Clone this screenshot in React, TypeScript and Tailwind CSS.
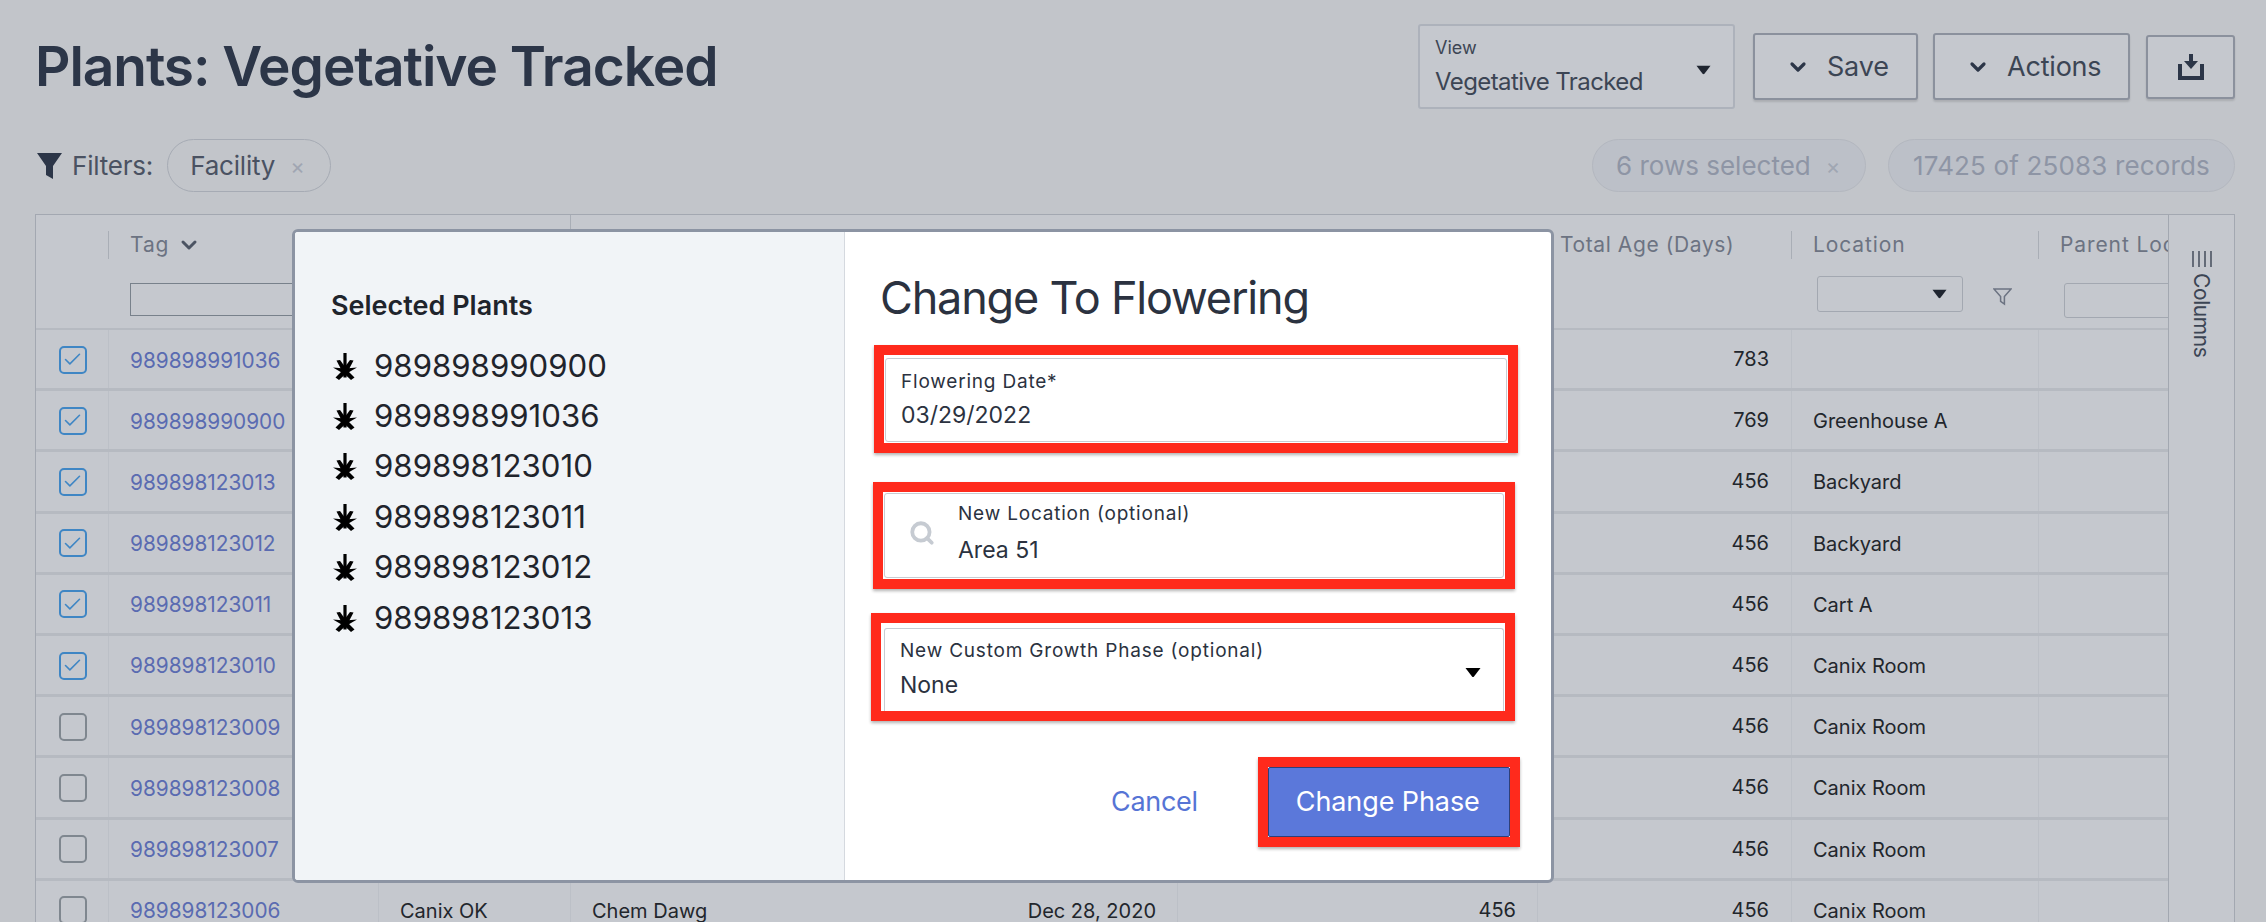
import React from "react";
import { ChevronDown, Check, Search } from "lucide-react";

const rows = [
  { tag: "989898991036", on: true, age: "783", loc: "" },
  { tag: "989898990900", on: true, age: "769", loc: "Greenhouse A" },
  { tag: "989898123013", on: true, age: "456", loc: "Backyard" },
  { tag: "989898123012", on: true, age: "456", loc: "Backyard" },
  { tag: "989898123011", on: true, age: "456", loc: "Cart A" },
  { tag: "989898123010", on: true, age: "456", loc: "Canix Room" },
  { tag: "989898123009", on: false, age: "456", loc: "Canix Room" },
  { tag: "989898123008", on: false, age: "456", loc: "Canix Room" },
  { tag: "989898123007", on: false, age: "456", loc: "Canix Room" },
  { tag: "989898123006", on: false, age: "456", loc: "Canix Room", last: true },
];

const plants = ["989898990900", "989898991036", "989898123010", "989898123011", "989898123012", "989898123013"];

function Caret({ className = "" }: { className?: string }) {
  return (
    <svg viewBox="0 0 16 10" className={className} fill="currentColor">
      <path d="M0.5 0.5 H15.5 L9 9 Q8 10 7 9 Z" />
    </svg>
  );
}

function Leaf() {
  return (
    <svg viewBox="0 0 24 27" className="h-[27px] w-[24px] shrink-0 text-black" fill="currentColor">
      <path d="M10.4 0 H13.6 V19 H10.4 Z" />
      <path d="M3.5 7.5 L7 7 L14 16.5 L10 20 Z" />
      <path d="M20.5 7.5 L17 7 L10 16.5 L14 20 Z" />
      <path d="M0 14.5 L12 15.5 L12 21.5 Z" />
      <path d="M24 14.5 L12 15.5 L12 21.5 Z" />
      <path d="M2.5 24.5 L10 17 L13 20.5 L6 27 Z" />
      <path d="M21.5 24.5 L14 17 L11 20.5 L18 27 Z" />
      <path d="M10.4 19 H13.6 V24.5 H10.4 Z" />
    </svg>
  );
}

function Box({ on }: { on: boolean }) {
  return (
    <div
      className={
        "flex h-[28px] w-[28px] items-center justify-center rounded-[5px] border-2 " +
        (on ? "border-[#3f86c4] text-[#3f86c4]" : "border-[#7f878f]")
      }
    >
      {on && <Check size={21} strokeWidth={1.8} />}
    </div>
  );
}

function Row({ r }: { r: (typeof rows)[number] }) {
  return (
    <div className="flex h-[61.2px] w-[2132px] shrink-0 items-stretch border-b-[3px] border-[#b6bac1] text-[20px] text-[#22262c]">
      <div className="flex w-[72px] items-center justify-center pl-[1px] pt-[1px]">
        <Box on={r.on} />
      </div>
      <div className="flex w-[270px] items-center border-l border-[#bcc0c7] pl-[21px] pt-[2px] text-[20.8px] text-[#5a6bb1]">{r.tag}</div>
      <div className="flex w-[192px] items-center border-l border-[#bcc0c7] pl-[21px] pt-[2px]">{r.last ? "Canix OK" : ""}</div>
      <div className="flex w-[607px] items-center justify-between border-l border-[#bcc0c7] pl-[21px] pr-[21px] pt-[2px]">
        <span>{r.last ? "Chem Dawg" : ""}</span>
        <span>{r.last ? "Dec 28, 2020" : ""}</span>
      </div>
      <div className="flex w-[360px] items-center justify-end border-l border-[#bcc0c7] pr-[21px]">{r.last ? "456" : ""}</div>
      <div className="flex w-[254px] items-center justify-end border-l border-[#bcc0c7] pr-[22px]">{r.age}</div>
      <div className="flex w-[247px] items-center border-l border-[#bcc0c7] pl-[21px] pt-[2px]">{r.loc}</div>
      <div className="w-[130px] border-l border-[#bcc0c7]" />
    </div>
  );
}

const redBox = "border-[10px] border-[#ff2a1c] shadow-[0_2px_3px_rgba(0,0,0,0.3)]";
const labelCls = "text-[19px] leading-[24px] tracking-[0.8px] text-[#2b3240]";
const valueCls = "text-[23px] leading-[28px] text-[#2b3240]";

export default function App() {
  return (
    <div className="relative h-[922px] w-[2266px] overflow-hidden bg-[#c2c5ca] font-['Inter',sans-serif] text-[#2c3648]">
      <div className="flex h-[109px] items-center justify-between pl-[35px] pr-[31px] pt-[24px]">
        <h1 className="mt-[-2px] text-[55px] font-semibold leading-[66px] tracking-[-1.05px] text-[#2c3648]">Plants: Vegetative Tracked</h1>
        <div className="flex items-center">
          <div className="relative h-[85px] w-[317px] rounded-[3px] border-2 border-[#adb2bb] bg-[#c5c8ce] pl-[15px] pt-[10px]">
            <div className="text-[18px] leading-[24px] text-[#3c4554]">View</div>
            <div className="mt-[8px] text-[24px] leading-[28px] tracking-[-0.6px] text-[#3c4554]">Vegetative Tracked</div>
            <Caret className="absolute right-[22px] top-[39px] h-[10px] w-[15px] text-[#1f2530]" />
          </div>
          <div className="ml-[18px] flex h-[67px] w-[165px] items-center rounded-[3px] border-2 border-[#8b919d] bg-[#c5c8ce] pl-[31px] text-[27px] tracking-[-0.2px] text-[#3c4554] shadow-[0_2px_2px_rgba(0,0,0,0.12)]">
            <ChevronDown size={24} strokeWidth={3.2} className="mr-[17px] text-[#2c3648]" />
            <span className="mt-[2px]">Save</span>
          </div>
          <div className="ml-[15px] flex h-[67px] w-[197px] items-center rounded-[3px] border-2 border-[#8b919d] bg-[#c5c8ce] pl-[31px] text-[27px] tracking-[-0.2px] text-[#3c4554] shadow-[0_2px_2px_rgba(0,0,0,0.12)]">
            <ChevronDown size={24} strokeWidth={3.2} className="mr-[17px] text-[#2c3648]" />
            <span className="mt-[2px]">Actions</span>
          </div>
          <div className="ml-[16px] flex h-[64px] w-[89px] items-center justify-center rounded-[3px] border-2 border-[#8b919d] bg-[#c5c8ce] shadow-[0_2px_2px_rgba(0,0,0,0.12)]">
            <svg viewBox="0 0 26 26" className="h-[26px] w-[26px] text-[#2c3648]" fill="currentColor">
              <path d="M11 0 H15 V7 H20 L13 15 L6 7 H11 Z" />
              <path d="M0 10 H4 V22 H22 V10 H26 V26 H0 Z" />
            </svg>
          </div>
        </div>
      </div>

      <div className="mt-[30px] flex h-[53px] items-center justify-between pl-[37px] pr-[31px]">
        <div className="flex items-center">
          <svg viewBox="0 0 25 26" className="h-[26px] w-[25px] text-[#2c3648]" fill="currentColor">
            <path d="M0 0 H25 L16 13 V26 L9 22 V13 Z" />
          </svg>
          <span className="ml-[10px] text-[26px] tracking-[-0.2px] text-[#4a5262]">Filters:</span>
          <div className="ml-[14px] flex h-[53px] w-[164px] items-center rounded-full border border-[#a6abb4] pl-[22px] text-[26px] tracking-[-0.2px] text-[#4a5262]">
            Facility
            <span className="ml-[15px] text-[22px] leading-none text-[#a0a6b2]">×</span>
          </div>
        </div>
        <div className="flex items-center">
          <div className="flex h-[53px] w-[274px] items-center rounded-full border border-[#b3b7bf] bg-[#bcc0c8] pl-[23px] text-[26px] text-[#8e95a5]">
            6 rows selected
            <span className="ml-[15px] text-[22px] leading-none text-[#a0a6b2]">×</span>
          </div>
          <div className="ml-[22px] flex h-[53px] w-[347px] items-center justify-center rounded-full border border-[#b3b7bf] bg-[#bcc0c8] text-[26px] tracking-[0.15px] text-[#8e95a5]">
            17425 of 25083 records
          </div>
        </div>
      </div>

      <div className="ml-[35px] mt-[22px] flex h-[720px] w-[2200px] border border-b-0 border-[#a3a8b1] bg-[#c5c8ce]">
        <div className="w-[2132px] shrink-0 overflow-hidden">
          <div className="flex h-[115px] w-[2132px] border-b-[2px] border-[#b6bac1] text-[21px] tracking-[0.9px] text-[#6c7382]">
            <div className="w-[72px]" />
            <div className="w-[270px]">
              <div className="mt-[16px] flex h-[28px] items-center border-l border-[#a9aeb6] pl-[21px]">
                Tag <ChevronDown size={24} strokeWidth={3} className="ml-[8px] text-[#4c5463]" />
              </div>
              <div className="ml-[22px] mt-[24px] h-[33px] w-[220px] border border-[#78818b]" />
            </div>
            <div className="w-[192px]" />
            <div className="h-[15px] w-[607px] border-l border-[#a9aeb6]" />
            <div className="w-[360px]" />
            <div className="w-[254px]">
              <div className="mt-[16px] flex h-[28px] items-center whitespace-nowrap pl-[23px] tracking-[0.6px]">Total Age (Days)</div>
            </div>
            <div className="w-[247px]">
              <div className="mt-[16px] flex h-[28px] items-center border-l border-[#a9aeb6] pl-[21px]">Location</div>
              <div className="ml-[26px] mt-[17px] flex items-center">
                <div className="flex h-[36px] w-[146px] items-center justify-end rounded-[3px] border border-[#a3a8b1] pr-[15px]">
                  <Caret className="h-[10px] w-[15px] text-[#1f2530]" />
                </div>
                <svg viewBox="0 0 20 20" className="ml-[30px] mt-[5px] h-[19px] w-[19px] text-[#6c7382]" fill="none" stroke="currentColor" strokeWidth="1.6">
                  <path d="M1 2 H19 L12 10 V18 L8 15 V10 Z" />
                </svg>
              </div>
            </div>
            <div className="w-[130px] overflow-hidden">
              <div className="mt-[16px] flex h-[28px] items-center whitespace-nowrap border-l border-[#a9aeb6] pl-[21px]">Parent Loc</div>
              <div className="ml-[26px] mt-[24px] h-[35px] w-[150px] rounded-[3px] border border-[#a3a8b1]" />
            </div>
          </div>
          {rows.map((r) => (
            <Row key={r.tag} r={r} />
          ))}
        </div>
        <div className="flex flex-1 justify-center border-l border-[#a3a8b1] pt-[36px]">
          <div className="flex h-fit items-center gap-[6px] text-[21px] leading-none tracking-[-0.4px] text-[#3c4554] [writing-mode:vertical-rl]">
            <svg viewBox="0 0 20 16" className="h-[16px] w-[20px]" fill="none" stroke="currentColor" strokeWidth="1.4">
              <path d="M1 0 V16 M7 0 V16 M13 0 V16 M19 0 V16" />
            </svg>
            Columns
          </div>
        </div>
      </div>

      <div className="absolute left-[292px] top-[229px] flex h-[654px] w-[1262px] overflow-hidden rounded-[6px] border-[3px] border-[#8c94a3] bg-white">
        <div className="w-[550px] border-r border-[#d5d9df] bg-[#f1f4f7] pl-[36px] pt-[57px] text-[#1f242c]">
          <h2 className="text-[27px] font-semibold leading-[34px]">Selected Plants</h2>
          <div className="mt-[18px] flex flex-col">
            {plants.map((p) => (
              <div key={p} className="flex h-[50.4px] items-center pl-[2px] text-[31.2px] leading-none">
                <Leaf />
                <span className="ml-[17px]">{p}</span>
              </div>
            ))}
          </div>
        </div>
        <div className="relative flex-1 pl-[35px]">
          <h2 className="mt-[37px] text-[45px] leading-[58px] tracking-[-1.2px] text-[#2b3240]">Change To Flowering</h2>
          <div className={"ml-[-6px] mt-[18px] h-[108px] w-[644px] " + redBox}>
            <div className="mx-[1px] my-[3px] h-[84px] rounded-[3px] border border-[#c8ccd2] bg-white pl-[15px] pt-[11px]">
              <div className={labelCls}>Flowering Date*</div>
              <div className={"mt-[7px] " + valueCls}>03/29/2022</div>
            </div>
          </div>
          <div className={"ml-[-7px] mt-[29px] h-[107px] w-[642px] " + redBox}>
            <div className="ml-[1px] mt-[1px] flex h-[85px] w-[620px] rounded-[3px] border border-[#c8ccd2] bg-white">
              <Search size={26} strokeWidth={3.5} className="ml-[24px] mt-[26px] text-[#c6cbd2]" />
              <div className="ml-[23px] pt-[8px]">
                <div className={labelCls}>New Location (optional)</div>
                <div className={"mt-[10px] " + valueCls}>Area 51</div>
              </div>
            </div>
          </div>
          <div className={"relative ml-[-9px] mt-[24px] h-[108px] w-[644px] " + redBox}>
            <div className="ml-[3px] mt-[5px] h-[83px] w-[620px] rounded-t-[3px] border border-b-0 border-[#c8ccd2] bg-white pl-[15px] pt-[10px]">
              <div className={labelCls}>New Custom Growth Phase (optional)</div>
              <div className={"mt-[8px] " + valueCls}>None</div>
            </div>
            <Caret className="absolute right-[24px] top-[44px] h-[11px] w-[16px] text-black" />
          </div>
          <div className="mt-[36px] flex items-center">
            <span className="ml-[231px] mt-[1px] text-[27px] tracking-[-0.3px] text-[#5674d5]">Cancel</span>
            <div className={"ml-[60px] h-[90px] w-[262px] " + redBox}>
              <div className="flex h-full items-center justify-center rounded-[2px] border border-[#2f4079] bg-[#5b78da] pr-[2px] pt-[1px] text-[27px] tracking-[-0.1px] text-white">
                Change Phase
              </div>
            </div>
          </div>
        </div>
      </div>
    </div>
  );
}
